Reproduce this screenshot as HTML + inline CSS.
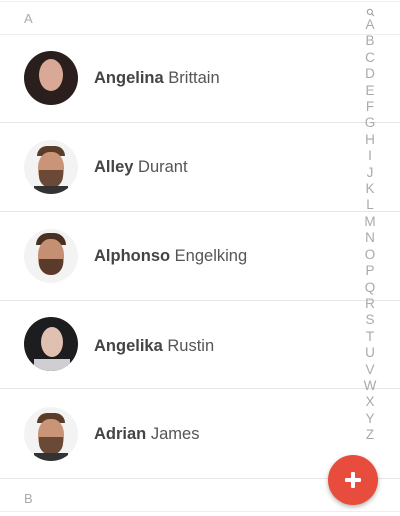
<!DOCTYPE html>
<html><head><style>
body{margin:0;width:400px;height:516px;overflow:hidden;background:#fff;font-family:"Liberation Sans",sans-serif;position:relative}
.hdr{position:absolute;left:0;width:400px;height:32px;border-top:1px solid #eee;border-bottom:1px solid #eee;color:#aaa;font-size:13px}
.hdr span{position:absolute;left:24px;top:9px}
.row{position:absolute;left:0;width:400px;height:88px;border-bottom:1px solid #e6e6e6}
.av{position:absolute;left:24px;top:17px;width:54px;height:54px;border-radius:50%;overflow:hidden;background:#eee}
.nm{position:absolute;left:94px;top:35px;font-size:16.5px;color:#555}
.nm b{font-weight:bold;color:#444}
.idx{position:absolute;left:362px;top:8px;width:16px;text-align:center;color:#aaa;font-size:13.5px;line-height:16.4px}
.fab{position:absolute;left:328px;top:455px;width:50px;height:50px;border-radius:50%;background:#e74c3c;box-shadow:0 2px 5px rgba(0,0,0,.3)}
</style></head><body>
<div class="hdr" style="top:1px"><span>A</span></div>
<div class="row" style="top:34px"><div class="av" style="background:#2a1f1c"><div style="position:absolute;left:15px;top:8px;width:24px;height:32px;border-radius:50%;background:#d9a896"></div></div><div class="nm"><b>Angelina</b> Brittain</div></div>
<div class="row" style="top:123px"><div class="av" style="background:#f3f3f3"><div style="position:absolute;left:13px;top:6px;width:28px;height:10px;border-radius:10px 10px 0 0;background:#5a3c28"></div><div style="position:absolute;left:14px;top:12px;width:26px;height:34px;border-radius:45%;background:#c99478"></div><div style="position:absolute;left:15px;top:30px;width:24px;height:18px;border-radius:0 0 12px 12px;background:#6a4a36"></div><div style="position:absolute;left:10px;top:46px;width:34px;height:10px;background:#333"></div></div><div class="nm"><b>Alley</b> Durant</div></div>
<div class="row" style="top:212px"><div class="av" style="background:#f3f3f3"><div style="position:absolute;left:12px;top:4px;width:30px;height:12px;border-radius:12px 12px 0 0;background:#4a3022"></div><div style="position:absolute;left:14px;top:10px;width:26px;height:36px;border-radius:45%;background:#c48f72"></div><div style="position:absolute;left:15px;top:30px;width:24px;height:16px;border-radius:0 0 12px 12px;background:#5a3a2a"></div></div><div class="nm"><b>Alphonso</b> Engelking</div></div>
<div class="row" style="top:300px"><div class="av" style="background:#1d1d1f"><div style="position:absolute;left:17px;top:10px;width:22px;height:30px;border-radius:50%;background:#e0c0b0"></div><div style="position:absolute;left:10px;top:42px;width:36px;height:14px;background:#cfcfd3"></div></div><div class="nm" style="top:37px"><b>Angelika</b> Rustin</div></div>
<div class="row" style="top:390px"><div class="av" style="background:#f3f3f3"><div style="position:absolute;left:13px;top:6px;width:28px;height:10px;border-radius:10px 10px 0 0;background:#5a3c28"></div><div style="position:absolute;left:14px;top:12px;width:26px;height:34px;border-radius:45%;background:#c99478"></div><div style="position:absolute;left:15px;top:30px;width:24px;height:18px;border-radius:0 0 12px 12px;background:#6a4a36"></div><div style="position:absolute;left:10px;top:46px;width:34px;height:10px;background:#333"></div></div><div class="nm"><b>Adrian</b> James</div></div>
<div class="hdr" style="top:479px;border-top:none"><span style="top:12px">B</span></div>
<div class="idx"><svg width="9" height="9" viewBox="0 0 9 9" style="display:block;margin:0 auto"><circle cx="3.8" cy="3.8" r="2.6" fill="none" stroke="#999" stroke-width="1"/><path d="M5.7 5.7L8 8" stroke="#999" stroke-width="1"/></svg>A<br>B<br>C<br>D<br>E<br>F<br>G<br>H<br>I<br>J<br>K<br>L<br>M<br>N<br>O<br>P<br>Q<br>R<br>S<br>T<br>U<br>V<br>W<br>X<br>Y<br>Z</div>
<div class="fab"><div style="position:absolute;left:17px;top:23px;width:16px;height:4px;background:#fff;border-radius:1px"></div><div style="position:absolute;left:23px;top:17px;width:4px;height:16px;background:#fff;border-radius:1px"></div></div>
</body></html>
